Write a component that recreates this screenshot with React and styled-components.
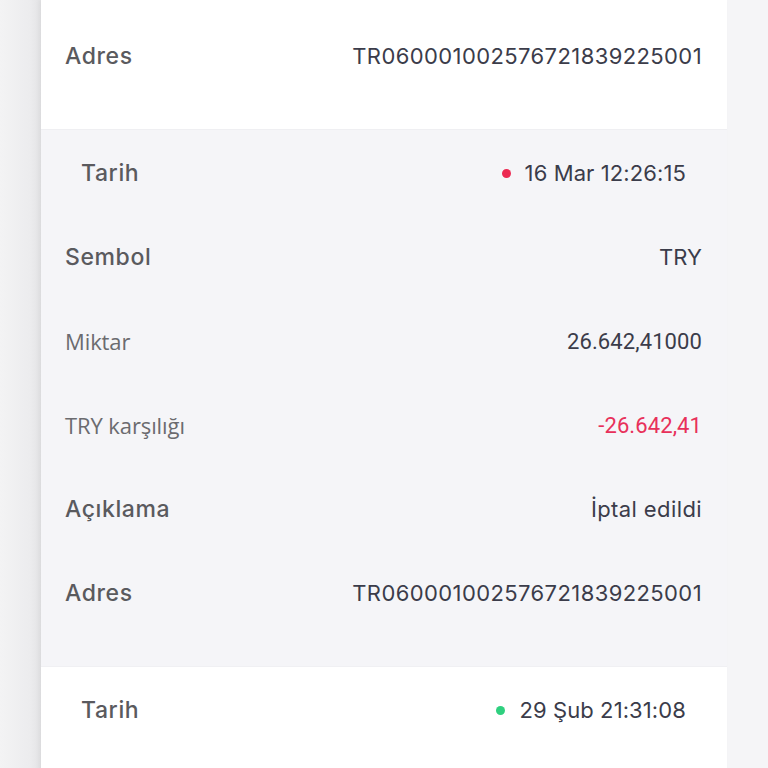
import React from "react"
import styled, { createGlobalStyle } from "styled-components"

const GlobalStyle = createGlobalStyle`
  html, body {
    margin: 0;
    padding: 0;
    background: #f5f5f7;
  }
  body {
    font-family: 'Inter', 'Liberation Sans', sans-serif;
    -webkit-font-smoothing: antialiased;
  }
`

const Page = styled.div`
  height: 768px;
  overflow: hidden;
  background: linear-gradient(90deg, #f3f3f4 0px, #ececee 30px, #e3e3e5 41px, #f5f5f7 41px);
`

const Card = styled.div`
  margin: 0 41px;
  background: #fff;
  box-shadow: -2px 0 4px rgba(0, 0, 0, 0.04);
`

// the previous record, scrolled so only its last line shows
const Tail = styled.section`
  background: #fff;
  padding: 35px 0 52px;
`

const Block = styled.section`
  background: ${p => (p.$shaded ? "#f5f5f8" : "#ffffff")};
  padding: 22px 0 ${p => (p.$cut ? 40 : 52)}px;
  display: flex;
  flex-direction: column;
  gap: 42px;
  border-top: 1px solid ${p => (p.$shaded ? "#efeff2" : "#f0f0f3")};
`

const Row = styled.div`
  display: flex;
  justify-content: space-between;
  align-items: center;
  height: 42px;
  padding: 0 ${p => (p.$inset ? 41 : 25)}px 0 ${p => (p.$inset ? 40 : 24)}px;
`

const Label = styled.span`
  font-size: ${p => (p.$light ? 22 : 23)}px;
  font-weight: ${p => (p.$light ? 400 : 500)};
  color: ${p => (p.$light ? "#6b6b6f" : "#5a5a5e")};
  font-family: ${p => (p.$light ? "'Open Sans', 'Liberation Sans', sans-serif" : "'Inter', 'Liberation Sans', sans-serif")};
  letter-spacing: ${p => (p.$light ? "-0.1px" : "0.6px")};
`

const Value = styled.span`
  font-size: 22px;
  font-weight: 400;
  color: ${p => (p.$negative ? "#e8305a" : "#3b3c4a")};
  font-family: ${p => (p.$num ? "'Roboto', 'Liberation Sans', sans-serif" : "'Inter', 'Liberation Sans', sans-serif")};
  letter-spacing: ${p => (p.$wide ? "0.4px" : "0.1px")};
  display: flex;
  align-items: center;
  gap: 14px;
`

const Dot = styled.i`
  width: 9px;
  height: 9px;
  border-radius: 50%;
  background: ${p => p.$color};
`

const transactions = [
  {
    date: "16 Mar 12:26:15",
    status: "#ec2a52",
    symbol: "TRY",
    amount: "26.642,41000",
    value: "-26.642,41",
    note: "İptal edildi",
    address: "TR060001002576721839225001",
  },
  {
    date: "29 Şub 21:31:08",
    status: "#2fd07f",
    symbol: "TRY",
    amount: "5.000,00000",
    value: "-5.000,00",
    note: "Tamamlandı",
    address: "TR060001002576721839225001",
  },
]

const DateRow = ({ tx }) => (
  <Row $inset>
    <Label>Tarih</Label>
    <Value>
      <Dot $color={tx.status} />
      {tx.date}
    </Value>
  </Row>
)

const Transaction = ({ tx, shaded, headOnly }) =>
  headOnly ? (
    <Block $shaded={shaded} $cut>
      <DateRow tx={tx} />
    </Block>
  ) : (
    <Block $shaded={shaded}>
      <DateRow tx={tx} />
      <Row>
        <Label>Sembol</Label>
        <Value>{tx.symbol}</Value>
      </Row>
      <Row>
        <Label $light>Miktar</Label>
        <Value $num>{tx.amount}</Value>
      </Row>
      <Row>
        <Label $light>TRY karşılığı</Label>
        <Value $num $negative>{tx.value}</Value>
      </Row>
      <Row>
        <Label>Açıklama</Label>
        <Value $wide>{tx.note}</Value>
      </Row>
      <Row>
        <Label>Adres</Label>
        <Value $wide>{tx.address}</Value>
      </Row>
    </Block>
  )

export default function App() {
  return (
    <>
      <GlobalStyle />
      <Page>
        <Card>
          <Tail>
            <Row>
              <Label>Adres</Label>
              <Value $wide>TR060001002576721839225001</Value>
            </Row>
          </Tail>
          {transactions.map((tx, i) => (
            <Transaction
              key={i}
              tx={tx}
              shaded={i % 2 === 0}
              headOnly={i === transactions.length - 1}
            />
          ))}
        </Card>
      </Page>
    </>
  )
}
